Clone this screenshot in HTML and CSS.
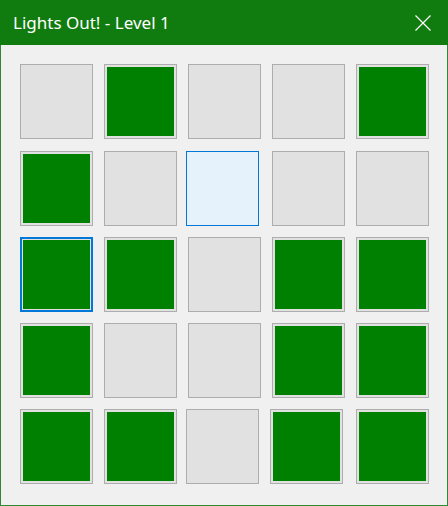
FILE: index.html
```html
<!DOCTYPE html>
<html lang="en">
<head>
    <meta charset="UTF-8">
    <title>Lights Out! - Level 1</title>
    <link rel="stylesheet" href="styles.css">
</head>
<body>
    <div class="window">
        <header class="title-bar">
            <span class="title">Lights Out! - Level 1</span>
            <button class="close-btn" title="Close">
                <svg width="16" height="16" viewBox="0 0 16 16">
                    <path d="M0.5 0.5 L15.5 15.5 M15.5 0.5 L0.5 15.5" stroke="#fff" stroke-width="1.2" fill="none"/>
                </svg>
            </button>
        </header>

        <main class="board">
            <!-- row 1 -->
            <button class="light"></button>
            <button class="light on"></button>
            <button class="light"></button>
            <button class="light"></button>
            <button class="light on"></button>
            <!-- row 2 -->
            <button class="light on"></button>
            <button class="light"></button>
            <button class="light hover shift"></button>
            <button class="light"></button>
            <button class="light"></button>
            <!-- row 3 -->
            <button class="light on focus"></button>
            <button class="light on"></button>
            <button class="light"></button>
            <button class="light on"></button>
            <button class="light on"></button>
            <!-- row 4 -->
            <button class="light on"></button>
            <button class="light"></button>
            <button class="light"></button>
            <button class="light on"></button>
            <button class="light on"></button>
            <!-- row 5 -->
            <button class="light on"></button>
            <button class="light on"></button>
            <button class="light shift"></button>
            <button class="light on shift"></button>
            <button class="light on"></button>
        </main>
    </div>
</body>
</html>
```

FILE: styles.css
```css
/* Basic Reset */
* {
    margin: 0;
    padding: 0;
    box-sizing: border-box;
}

body {
    background-color: #f0f0f0;
    font-family: "Noto Sans", "Open Sans", sans-serif;
}

/* Window frame */
.window {
    width: 448px;
    height: 506px;
    background: #f0f0f0;
    border: 1px solid #2f8a2f;
    border-top: none;
    display: flex;
    flex-direction: column;
}

.title-bar {
    height: 45px;
    margin: 0 -1px;
    background: #107c10;
    color: #fff;
    display: flex;
    align-items: center;
    justify-content: space-between;
    padding: 0 0 0 13px;
}

.title {
    font-size: 17px;
    line-height: 1;
    margin-top: -1px;
}

.close-btn {
    width: 46px;
    height: 45px;
    background: none;
    border: none;
    display: flex;
    align-items: center;
    justify-content: center;
    margin-right: 2px;
}

/* Game board */
.board {
    display: grid;
    grid-template-columns: repeat(5, 73px);
    grid-template-rows: 76px 75px 75px 75px 75px;
    column-gap: 11px;
    row-gap: 11px;
    padding: 19px 0 0 19px;
    align-items: start;
}

.light {
    width: 73px;
    height: 75px;
    border: 1px solid #adadad;
    padding: 2px;
    background: #e1e1e1;
    background-clip: padding-box;
}

.light.on {
    background: #008000;
    box-shadow: inset 0 0 0 2px #e1e1e1;
}

.light.hover {
    background: #e5f1fb;
    border-color: #0078d7;
}

.light.focus {
    border: 2px solid #0078d7;
    box-shadow: inset 0 0 0 1px #e1e1e1;
}

.light.shift {
    margin-left: -2px;
}
```
